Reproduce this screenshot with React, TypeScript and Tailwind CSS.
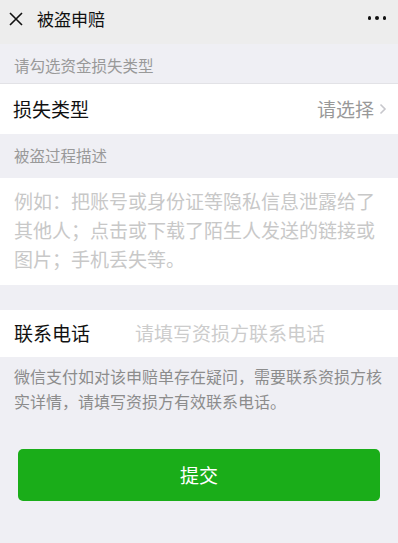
const font = { fontFamily: '"PingFang SC", "Noto Sans CJK SC", "Noto Sans", sans-serif' };

export default function App() {
  return (
    <div className="min-h-[543px] w-full bg-[#efeff4] font-['Noto_Sans_CJK_SC',sans-serif]">
      {/* 顶部栏 */}
      <header className="flex h-[44px] items-start justify-between bg-[#ededed] pl-[8px] pr-[12px] pt-[10px]">
        <div className="flex items-center">
          <svg width="16" height="16" viewBox="0 0 16 16" className="text-[#111]">
            <path d="M2 2 L14 14 M14 2 L2 14" stroke="currentColor" strokeWidth="1.6" fill="none" />
          </svg>
          <span className="ml-[13px] text-[17px] leading-none text-[#111]">被盗申赔</span>
        </div>
        <div className="flex items-center gap-[4px] pt-[6px]">
          <span className="h-[3.5px] w-[3.5px] rounded-full bg-[#111]" />
          <span className="h-[3.5px] w-[3.5px] rounded-full bg-[#111]" />
          <span className="h-[3.5px] w-[3.5px] rounded-full bg-[#111]" />
        </div>
      </header>

      <p className="flex h-[39px] items-center px-[14px] pt-[4px] text-[15.5px] text-[#999]">请勾选资金损失类型</p>

      <div className="flex h-[51px] items-center justify-between border-t border-[#e2e2e6] bg-white pl-[13px] pr-[11px]">
        <span className="text-[19px] text-[#111]">损失类型</span>
        <span className="flex items-center text-[19px] text-[#999]">
          请选择
          <svg width="8" height="12" viewBox="0 0 8 12" className="ml-[5px]">
            <path d="M1.5 1.5 L6 6 L1.5 10.5" stroke="#c7c7cc" strokeWidth="1.6" fill="none" />
          </svg>
        </span>
      </div>

      <p className="flex h-[44px] items-center px-[14px] text-[15.5px] text-[#999]">被盗过程描述</p>

      <div className="h-[107px] bg-white px-[14px] pt-[8px] text-[19px] leading-[29px] text-[#c8c8c8]">
        例如：把账号或身份证等隐私信息泄露给了其他人；点击或下载了陌生人发送的链接或图片；手机丢失等。
      </div>

      <div className="h-[25px]" />

      <div className="flex h-[47px] items-center bg-white px-[14px]">
        <span className="w-[121px] text-[19px] text-[#111]">联系电话</span>
        <span className="text-[19px] text-[#cccccc]">请填写资损方联系电话</span>
      </div>

      <p className="px-[14px] pt-[7px] text-[16px] leading-[25px] text-[#8c8c8c]">
        微信支付如对该申赔单存在疑问，需要联系资损方核实详情，请填写资损方有效联系电话。
      </p>

      <div className="px-[18px] pt-[35px]" style={font}>
        <button className="flex h-[52px] w-full items-center justify-center rounded-[5px] bg-[#1aad19] text-[19px] text-white">
          提交
        </button>
      </div>
    </div>
  );
}
